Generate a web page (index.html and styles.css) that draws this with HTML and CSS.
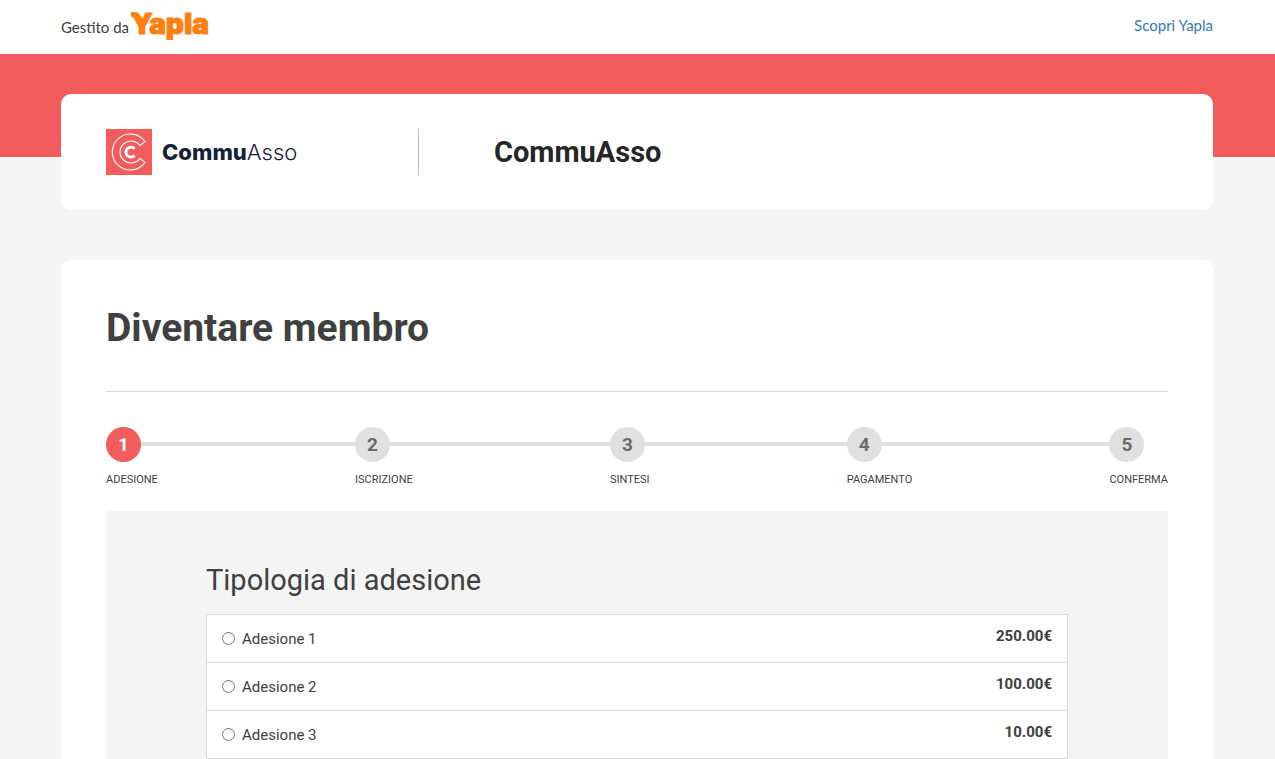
FILE: index.html
```html
<!DOCTYPE html>
<html lang="it">
<head>
<meta charset="utf-8">
<meta name="viewport" content="width=device-width, initial-scale=1">
<title>CommuAsso - Diventare membro</title>
<link rel="stylesheet" href="styles.css">
</head>
<body>
<header class="topbar">
  <div class="powered">Gestito da
    <svg class="yapla" viewBox="0 0 84 32" role="img" aria-label="Yapla">
      <path d="M0 4Q5 3 8 7L12 13" class="yapla-flare"/>
      <text x="0" y="23">Yapla</text>
    </svg>
  </div>
  <a class="discover" href="#">Scopri Yapla</a>
</header>
<div class="banner"></div>
<main class="page">
  <section class="card brand-card">
    <div class="brand">
      <svg class="brand-mark" viewBox="0 0 46 46" aria-hidden="true">
        <rect width="46" height="46" fill="#f25c5c"/>
        <g fill="none" stroke="#fff">
          <path d="M39 12.6A18 18 0 1 0 39 33.4L34 29.4A11 11 0 1 1 34 16.6Z" stroke-width="1.2" stroke-linejoin="round"/>
          <path d="M28.6 19.7A5 5 0 1 0 28.6 26.5" stroke-width="2.9"/>
        </g>
      </svg>
      <span class="brand-name"><strong>Commu</strong>Asso</span>
    </div>
    <p class="org-name">CommuAsso</p>
  </section>
  <section class="card form-card">
    <h1 class="title">Diventare membro</h1>
    <ol class="steps">
      <li class="step current" aria-current="step"><span class="dot">1</span><span class="step-label">ADESIONE</span></li>
      <li class="step"><span class="dot">2</span><span class="step-label">ISCRIZIONE</span></li>
      <li class="step"><span class="dot">3</span><span class="step-label">SINTESI</span></li>
      <li class="step"><span class="dot">4</span><span class="step-label">PAGAMENTO</span></li>
      <li class="step"><span class="dot">5</span><span class="step-label">CONFERMA</span></li>
    </ol>
    <form class="panel">
      <fieldset class="types">
        <legend class="subtitle">Tipologia di adesione</legend>
        <div class="options">
          <label class="option"><input type="radio" name="tipo"><span class="option-name">Adesione 1</span><strong class="price">250.00€</strong></label>
          <label class="option"><input type="radio" name="tipo"><span class="option-name">Adesione 2</span><strong class="price">100.00€</strong></label>
          <label class="option"><input type="radio" name="tipo"><span class="option-name">Adesione 3</span><strong class="price">10.00€</strong></label>
        </div>
      </fieldset>
    </form>
  </section>
</main>
</body>
</html>
```
FILE: styles.css
```css
* { box-sizing: border-box; }
body {
  margin: 0;
  background: #f5f5f5;
  color: #404040;
  font: 15px/20px Roboto, sans-serif;
}
.topbar {
  display: flex;
  justify-content: space-between;
  align-items: center;
  height: 54px;
  padding: 0 62px 4px 61px;
  background: #fff;
  font-family: Lato, sans-serif;
}
.powered { display: flex; align-items: center; gap: 2px; padding-top: 4px; }
.yapla { width: 84px; height: 32px; fill: #ff7f11; overflow: visible; }
.yapla text { font: 900 28px Inter, sans-serif; stroke: #ff7f11; stroke-width: 1px; }
.yapla-flare { fill: none; stroke: #ff7f11; stroke-width: 5px; }
.discover { color: #337ab7; text-decoration: none; }
.banner { height: 103px; background: #f25c5c; }
.page { padding: 0 62px 0 61px; margin-top: -63px; }
.card { background: #fff; border-radius: 10px; }
.brand-card {
  display: flex;
  align-items: center;
  padding: 35px 45px;
  margin-bottom: 50px;
}
.brand {
  display: flex;
  align-items: center;
  gap: 10px;
  width: 313px;
  border-right: 1px solid #bbb;
}
.brand-mark { width: 46px; height: 46px; }
.brand-name { color: #152238; font: 300 22px/24px Inter, sans-serif; }
.brand-name strong { font-weight: 800; }
.org-name { margin: 0 0 0 75px; color: #262626; font-size: 29px; line-height: 40px; font-weight: 700; }
.form-card { padding: 45px 45px 0; border-radius: 10px 10px 0 0; }
.title {
  margin: 0 0 35px;
  padding-bottom: 39px;
  border-bottom: 1px solid #dadada;
  font-size: 39px;
  line-height: 47px;
  font-weight: 700;
}
.steps {
  position: relative;
  display: flex;
  justify-content: space-between;
  margin: 0 0 21px;
  padding: 0;
  list-style: none;
}
.steps::before {
  content: "";
  position: absolute;
  top: 15px;
  left: 0;
  right: 50px;
  height: 4px;
  background: #e0e0e0;
}
.step { position: relative; display: flex; flex-direction: column; gap: 8px; }
.dot {
  width: 35px;
  height: 35px;
  border-radius: 50%;
  background: #e0e0e0;
  color: #6b6b6b;
  font-size: 19px;
  line-height: 35px;
  font-weight: 700;
  text-align: center;
}
.current .dot { background: #f25c5c; color: #fff; }
.step-label { font-size: 11px; line-height: 20px; }
.panel { padding: 50px 100px 0; background: #f4f4f4; }
.types { min-width: 0; margin: 0; padding: 0; border: 0; }
.subtitle { padding: 0 0 15px; font-size: 29px; line-height: 38px; }
.options { background: #fff; border: 1px solid #dadada; }
.option { display: flex; align-items: center; box-sizing: content-box; height: 47px; padding: 0 15px; }
.option + .option { border-top: 1px solid #dadada; }
.option input { width: 13px; height: 13px; margin: 0 7px 0 0; }
.option-name { flex: 1; }
.price { padding-bottom: 6px; }
```
